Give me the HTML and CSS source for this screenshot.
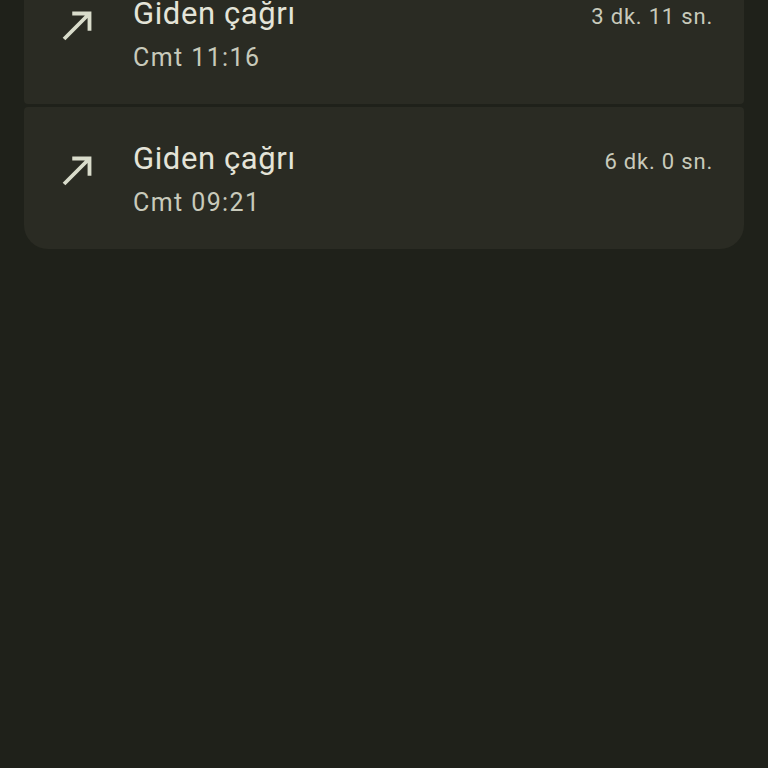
FILE: index.html
```html
<!DOCTYPE html>
<html lang="tr">
<head>
  <meta charset="UTF-8">
  <meta name="viewport" content="width=device-width, initial-scale=1.0">
  <title>Arama geçmişi</title>
  <link rel="stylesheet" href="styles.css">
</head>
<body>
  <div class="call-list">
    <div class="call-item">
      <svg class="call-icon" viewBox="0 0 24 24" fill="currentColor">
        <path d="M9 5v2h6.59L4 18.59 5.41 20 17 8.41V15h2V5z"></path>
      </svg>
      <div class="call-info">
        <div class="call-header">
          <div class="call-title">Giden çağrı</div>
          <div class="call-duration">3 dk. 11 sn.</div>
        </div>
        <div class="call-time">Cmt 11:16</div>
      </div>
    </div>

    <div class="call-item">
      <svg class="call-icon" viewBox="0 0 24 24" fill="currentColor">
        <path d="M9 5v2h6.59L4 18.59 5.41 20 17 8.41V15h2V5z"></path>
      </svg>
      <div class="call-info">
        <div class="call-header">
          <div class="call-title">Giden çağrı</div>
          <div class="call-duration">6 dk. 0 sn.</div>
        </div>
        <div class="call-time">Cmt 09:21</div>
      </div>
    </div>
  </div>
</body>
</html>
```

FILE: styles.css
```css
html, body {
  height: 100%;
}

body {
  font-family: Roboto, "Noto Sans", Arial, sans-serif;
  margin: 0;
  padding: 0 24px;
  background-color: #1f211a;
  color: #e4e4d8;
  overflow: hidden;
}

/* list is scrolled: first item is partly above the top edge */
.call-list {
  display: flex;
  flex-direction: column;
  gap: 3px;
  margin-top: -38px;
}

.call-item {
  display: flex;
  align-items: flex-start;
  padding: 32px 31px 30px 31px;
  background-color: #2a2b23;
  border-radius: 4px;
}

.call-item:first-child {
  border-radius: 24px 24px 4px 4px;
}

.call-item:last-child {
  border-radius: 4px 4px 24px 24px;
}

.call-icon {
  flex: none;
  width: 46px;
  height: 46px;
  margin-top: 8px;
  margin-right: 32px;
  color: #d9dccb;
}

.call-info {
  flex: 1;
}

.call-header {
  display: flex;
  justify-content: space-between;
  align-items: baseline;
}

.call-title {
  font-size: 31px;
  line-height: 40px;
  letter-spacing: 0.6px;
  color: #e4e4d8;
}

.call-duration {
  font-size: 22px;
  letter-spacing: 0.8px;
  color: #c8cabb;
}

.call-time {
  margin-top: 8px;
  font-size: 25px;
  line-height: 32px;
  letter-spacing: 1.4px;
  color: #c8cabb;
}
```
